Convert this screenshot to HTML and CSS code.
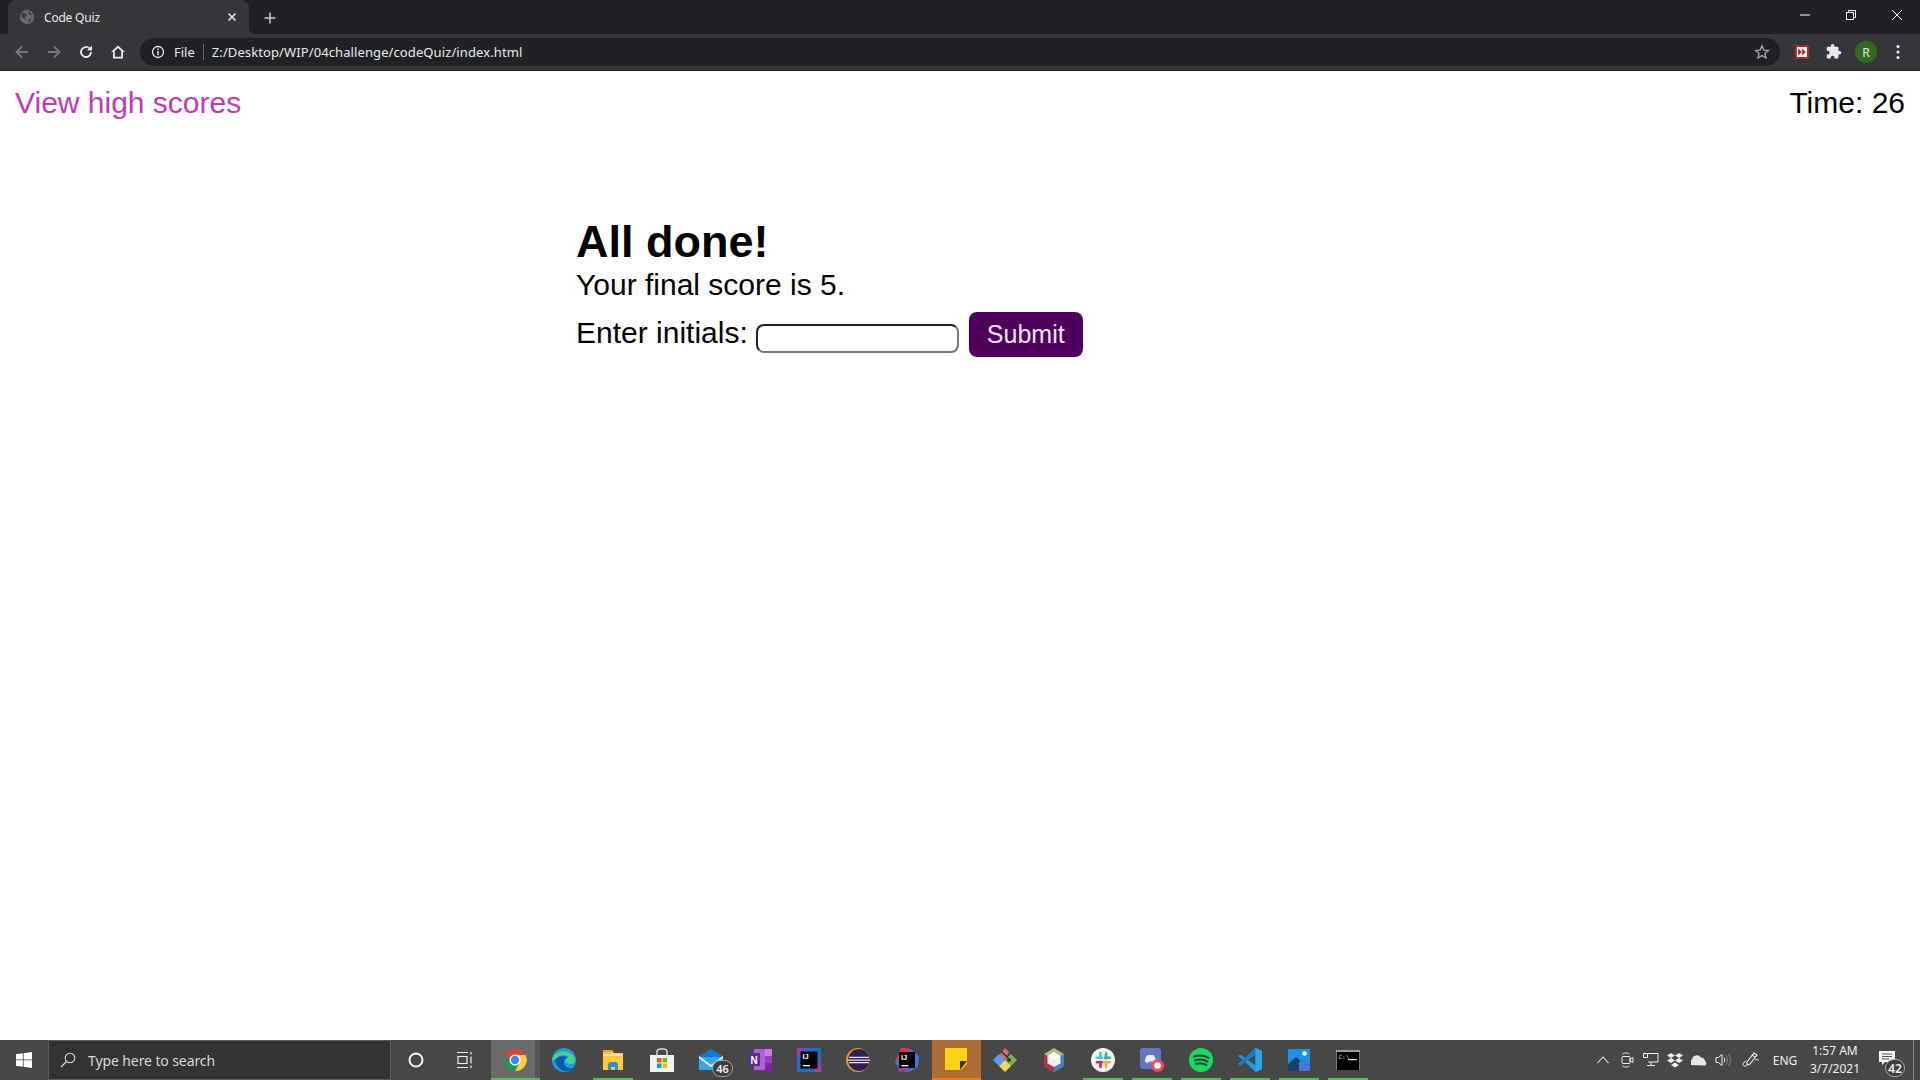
FILE: index.html
```html
<!DOCTYPE html>
<html lang="en">
<head>
<meta charset="utf-8">
<title>Code Quiz</title>
<link rel="stylesheet" href="styles.css">
</head>
<body>
<div class="screen">
  <div class="chrome">
    <div class="tabstrip">
      <div class="tab">
        <svg class="favicon" viewBox="0 0 16 16"><circle cx="8" cy="8" r="7" fill="#6a6b6f"/><path d="M3.500 3.500l4 1.500 1 2-3 1 1.500 3-2-1-3-3zM10 2.500l3 3-2 1-2-3zM10 10.500l2.500-1.500-1.500 4-2 0z" fill="#3c3d41"/></svg>
        <span class="tabtitle">Code Quiz</span>
        <svg class="tabclose" viewBox="0 0 10 10"><path d="M1.500 1.500l7 7M8.500 1.500l-7 7" stroke="#e8eaed" stroke-width="1.600"/></svg>
      </div>
      <svg class="newtab" viewBox="0 0 12 12"><path d="M6 .5v11M.5 6h11" stroke="#c8cacd" stroke-width="1.500"/></svg>
      <div class="winctrls">
        <svg class="winbtn" viewBox="0 0 46 14"><path d="M18 7h10" stroke="#fff" stroke-width="1"/></svg>
        <svg class="winbtn" viewBox="0 0 46 14"><path d="M18.500 4.500h7v7h-7zM20.500 4.500v-2h7v7h-2" fill="none" stroke="#fff" stroke-width="1"/></svg>
        <svg class="winbtn" viewBox="0 0 46 14"><path d="M18 2l10 10M28 2l-10 10" stroke="#fff" stroke-width="1"/></svg>
      </div>
    </div>
    <div class="toolbar">
      <svg class="navicon" viewBox="0 0 16 16"><path d="M14 8H3M8 2.500L2.500 8 8 13.500" fill="none" stroke="#77787b" stroke-width="1.800"/></svg>
      <svg class="navicon" viewBox="0 0 16 16"><path d="M2 8h11M8 2.500L13.500 8 8 13.500" fill="none" stroke="#77787b" stroke-width="1.800"/></svg>
      <svg class="navicon" viewBox="0 0 16 16"><path d="M13 8a5 5 0 1 1-1.500-3.600" fill="none" stroke="#e8eaed" stroke-width="1.800"/><path d="M14 1.500v5h-5z" fill="#e8eaed"/></svg>
      <svg class="navicon" viewBox="0 0 16 16"><path d="M8 1.500L1 8h2v6.500h10V8h2zM4.800 12.800V7L8 4l3.200 3v5.800z" fill="#e8eaed"/></svg>
      <div class="omnibox">
        <svg class="info" viewBox="0 0 14 14"><circle cx="7" cy="7" r="5.500" fill="none" stroke="#e8eaed" stroke-width="1.300"/><path d="M7 6v4.200M7 3.600v1.300" stroke="#e8eaed" stroke-width="1.400"/></svg>
        <span class="scheme">File</span>
        <span class="omnidiv"></span>
        <span class="url">Z:/Desktop/WIP/04challenge/codeQuiz/index.html</span>
        <svg class="star" viewBox="0 0 16 16"><path d="M8 1.800l1.800 4.300 4.600.4-3.500 3 1.100 4.500L8 11.600 4 14l1.100-4.500-3.500-3 4.600-.4z" fill="none" stroke="#a5a6a8" stroke-width="1.300"/></svg>
      </div>
      <div class="extensions">
        <svg class="ext" viewBox="0 0 16 16"><rect x="1" y="1" width="14" height="14" rx="2" fill="#b02a2e"/><rect x="3" y="3" width="10" height="10" fill="#fff"/><path d="M4 4.500L8 8l-4 3.500zM8 4.500L12 8l-4 3.500z" fill="#b02a2e"/></svg>
        <svg class="ext" viewBox="1 1 23 23"><path d="M20.500 11H19V7c0-1.100-.9-2-2-2h-4V3.500C13 2.120 11.880 1 10.500 1S8 2.120 8 3.500V5H4c-1.100 0-1.990.9-1.990 2v3.800H3.500c1.490 0 2.700 1.210 2.700 2.700s-1.210 2.700-2.700 2.700H2V20c0 1.100.9 2 2 2h3.800v-1.500c0-1.490 1.210-2.700 2.700-2.700 1.490 0 2.700 1.210 2.700 2.700V22H17c1.100 0 2-.9 2-2v-4h1.500c1.380 0 2.500-1.120 2.500-2.500S21.880 11 20.500 11z" fill="#e8eaed"/></svg>
        <span class="avatar">R</span>
        <svg class="ext" viewBox="0 0 16 16"><circle cx="8" cy="2.500" r="1.600" fill="#e8eaed"/><circle cx="8" cy="8" r="1.600" fill="#e8eaed"/><circle cx="8" cy="13.500" r="1.600" fill="#e8eaed"/></svg>
      </div>
    </div>
  </div>

  <div class="page">
    <header class="pagehead">
      <a class="scores" href="#">View high scores</a>
      <span class="timer">Time: 26</span>
    </header>
    <main class="done">
      <h1 class="title">All done!</h1>
      <p class="score">Your final score is 5.</p>
      <form class="entry">
        <label class="entrylabel" for="initials">Enter initials:</label>
        <input class="entryinput" id="initials" type="text">
        <button class="submit" type="button">Submit</button>
      </form>
    </main>
  </div>

  <footer class="taskbar">
    <div class="startbtn">
      <svg class="icon16" viewBox="0 0 16 16"><path d="M0 2.300l6.800-1v6.200H0zM7.600 1.200L16 0v7.500H7.600zM0 8.300h6.800v6.400l-6.800-1zM7.600 8.300H16V16l-8.400-1.200z" fill="#fff"/></svg>
    </div>
    <div class="searchbox">
      <svg class="searchicon" viewBox="0 0 16 16"><circle cx="10" cy="6" r="4.800" fill="none" stroke="#ddd" stroke-width="1.100"/><path d="M6.500 9.500L1 15" stroke="#ddd" stroke-width="1.100"/></svg>
      <span class="searchtext">Type here to search</span>
    </div>
    <div class="sysbtn"><svg class="icon16" viewBox="0 0 16 16"><circle cx="8" cy="8" r="6.500" fill="none" stroke="#f3f3f3" stroke-width="2"/></svg></div>
    <div class="sysbtn"><svg class="icon16" viewBox="0 0 16 16"><path d="M0 .5h11M0 15.500h11M1 4.500h9v7H1zM14 0v2.500M14 4.500v7M14 13.500v2.500" fill="none" stroke="#f0f0f0" stroke-width="1.200"/></svg></div>

    <div class="app app-active">
      <svg class="appicon" viewBox="0 0 24 24"><circle cx="12" cy="12" r="11" fill="#db4437"/><path d="M12 12L2.500 17.500A11 11 0 0 0 12 23l5-9z" fill="#0f9d58"/><path d="M2.500 17.500A11 11 0 0 1 2.500 6.500L7 14z" fill="#0f9d58"/><path d="M12 7h10.500A11 11 0 0 1 12 23l5-9z" fill="#ffcd40"/><circle cx="12" cy="12" r="5.500" fill="#fff"/><circle cx="12" cy="12" r="4.200" fill="#4285f4"/></svg>
    </div>
    <div class="app">
      <svg class="appicon" viewBox="0 0 24 24"><circle cx="12" cy="12" r="12" fill="#1b9de2"/><path d="M0 12C2 4 11 1 18 5c5 3 6 8 4 10-3 2-9 1-9-2 0-2 3-2 3-4-2-3-10-3-13 3z" fill="#4ed08a"/><path d="M3 12c1 6 5 11 11 11 3 0 6-1 8-3-4 1-10 0-10-6 0-3 2-4 4-5-5-2-12 0-13 3z" fill="#0c5ba8"/></svg>
    </div>
    <div class="app app-open">
      <svg class="appicon" viewBox="0 0 24 24"><path d="M2 2h9l2 3h9v17H2z" fill="#ffc83d"/><path d="M2 2h9l1 2H2z" fill="#e9a825"/><path d="M2 6h20v2H2z" fill="#ffe08a"/><path d="M7 22v-5a3 3 0 0 1 3-3h4a3 3 0 0 1 3 3v5h-3v-3h-4v3z" fill="#2d8fd8"/></svg>
    </div>
    <div class="app">
      <svg class="appicon" viewBox="0 0 24 24"><path d="M7 7V3a3 3 0 0 1 3-2h4a3 3 0 0 1 3 2v4" fill="none" stroke="#d8d8d8" stroke-width="1.500"/><path d="M0 7h24v17H0z" fill="#f3f3f3"/><path d="M7 10h4.500v4.500H7z" fill="#f25022"/><path d="M12.500 10H17v4.500h-4.500z" fill="#7fba00"/><path d="M7 15.500h4.500V20H7z" fill="#00a4ef"/><path d="M12.500 15.500H17V20h-4.500z" fill="#ffb900"/></svg>
    </div>
    <div class="app">
      <svg class="appicon" viewBox="0 0 24 24"><path d="M0 8L12 1l12 7v14H0z" fill="#0f78d4"/><path d="M0 9h24v13H0z" fill="#3ca4eb"/><path d="M0 8l12 9 12-9v2L12 19 0 10z" fill="#f2f6fa"/></svg>
      <span class="badge badge-mail">46</span>
    </div>
    <div class="app">
      <svg class="appicon" viewBox="0 0 24 24"><path d="M6 1h18v22H6z" fill="#b260d8"/><path d="M17 1h7v7h-7z" fill="#c77fe6"/><path d="M17 8h7v7h-7z" fill="#9a3fc4"/><path d="M17 15h7v8H6v-1h11z" fill="#7a2aa0"/><path d="M0 5h12v13H0z" fill="#5b2b9c"/><text class="appglyph" x="6" y="15.500">N</text></svg>
    </div>
    <div class="app">
      <svg class="appicon" viewBox="0 0 24 24"><path d="M0 0h24v24H0z" fill="#1f6fc4"/><path d="M0 0h8L0 8zM24 24V12l-8 12z" fill="#a83a9a"/><path d="M3.500 3.500h17v17h-17z" fill="#000"/><text class="ijtext" x="5.500" y="11">IJ</text><path d="M6 17h7v1.300H6z" fill="#fff"/></svg>
    </div>
    <div class="app">
      <svg class="appicon" viewBox="0 0 24 24"><circle cx="12" cy="12" r="12" fill="#f7941e"/><circle cx="13" cy="12" r="11" fill="#2c2255"/><path d="M3 8.800h20v1.300H3zM2 11.400h22v1.300H2zM3 14h20v1.300H3z" fill="#e8e4f4"/></svg>
    </div>
    <div class="app">
      <svg class="appicon" viewBox="0 0 24 24"><path d="M6 0l10 1 8 7-1 11-9 5-9-1-5-9z" fill="#2f7de0"/><path d="M0 14L6 0l10 1-5 8z" fill="#e8334c"/><path d="M3 23l2-10 9 11z" fill="#a83a9a"/><path d="M4 4h16v16H4z" fill="#000"/><text class="ijtext" x="6" y="11.500">IJ</text><path d="M6.500 17h7v1.300h-7z" fill="#fff"/></svg>
    </div>
    <div class="app app-sticky">
      <svg class="appicon" viewBox="0 0 24 24"><path d="M1 1h22v16l-6 6H1z" fill="#fcd116"/><path d="M16 14h7l-7 9z" fill="#3a3226"/></svg>
    </div>
    <div class="app">
      <svg class="appicon" viewBox="0 0 24 24"><path d="M12 0l4 4-4 8-8-2z" fill="#e06a6a"/><path d="M0 12l6-6 6 6-6 6z" fill="#5b9cf0"/><path d="M12 12l6-6 6 6-6 6z" fill="#76b84e"/><path d="M6 18l6-6 6 6-6 6z" fill="#f0d860"/><path d="M8 3l7 7" stroke="#333" stroke-width="1.600"/><circle cx="16" cy="12" r="2" fill="#333"/></svg>
    </div>
    <div class="app">
      <svg class="appicon" viewBox="0 0 24 24"><path d="M12 0l10 6v12l-10 6-10-6V6z" fill="#a8c070"/><path d="M2 6l10 6v12L2 18z" fill="#b03050"/><path d="M22 6l-10 6v12l10-6z" fill="#3f7fc8"/><path d="M12 4l6.500 4v7.500L12 19l-6.500-3.500V8z" fill="#f3efe2"/><path d="M12 11.500l6.500-3.500-6.500-4-6.500 4z" fill="#fff"/></svg>
    </div>
    <div class="app app-open">
      <svg class="appicon" viewBox="0 0 24 24"><circle cx="12" cy="12" r="12" fill="#f4f4f4"/><path d="M9.500 5v5M6 9.800h5" stroke="#36c5f0" stroke-width="2.600" stroke-linecap="round"/><path d="M15 5.500v5M14 9.800h5" stroke="#2eb67d" stroke-width="2.600" stroke-linecap="round"/><path d="M15 14v5M14 14.300h5" stroke="#ecb22e" stroke-width="2.600" stroke-linecap="round"/><path d="M9.500 14v5M6 14.300h5" stroke="#e01e5a" stroke-width="2.600" stroke-linecap="round"/></svg>
    </div>
    <div class="app app-open">
      <svg class="appicon" viewBox="0 0 24 24"><rect x="0" y="0" width="21" height="21" rx="3" fill="#6276c4"/><path d="M5 14c0-3 1-6 3-7h5c2 1 3 4 3 7l-3 1-1-1.500H9L8 15z" fill="#eef"/><circle cx="17.500" cy="17.500" r="6.500" fill="#e8515b"/><circle cx="17.500" cy="17.500" r="3.200" fill="#fff"/></svg>
    </div>
    <div class="app app-open">
      <svg class="appicon" viewBox="0 0 24 24"><circle cx="12" cy="12" r="12" fill="#1ed760"/><path d="M5 8.500c5-1.500 10-1 14.500 1.300M6 12.300c4.500-1.200 9-.7 12.500 1.300M6.800 15.800c3.700-1 7.500-.6 10.500 1.100" fill="none" stroke="#143" stroke-width="2" stroke-linecap="round"/></svg>
    </div>
    <div class="app app-open">
      <svg class="appicon" viewBox="0 0 24 24"><path d="M17.500 0L24 3v18l-6.500 3L7 14l-4.500 3.500L0 16l5-4-5-4 2.500-1.500L7 10z" fill="#1c9ce8"/><path d="M17.500 6.500v11L10 12z" fill="#474747"/><path d="M17.500 0L24 3v18l-6.500 3z" fill="#28a8f0"/><path d="M0 16l2.500 1.500L17.500 6V0z" fill="#0a6cb4" opacity=".6"/></svg>
    </div>
    <div class="app app-open">
      <svg class="appicon" viewBox="0 0 24 24"><path d="M1 1h22v22H1z" fill="#1e90e8"/><path d="M1 23v-7l8-7 14 12v2z" fill="#18406f"/><path d="M12 14l5-3 6 5v7H12z" fill="#4a78d0"/><circle cx="17.500" cy="5.500" r="2.300" fill="#fff"/></svg>
    </div>
    <div class="app app-open">
      <svg class="appicon" viewBox="0 0 24 24"><path d="M0 2h24v20H0z" fill="#000"/><path d="M0 2h24v2H0z" fill="#9a9a9a"/><path d="M0 4h1v18H0zM23 4h1v18h-1z" fill="#777"/><text class="termtext" x="2.500" y="11">C:\</text><path d="M12 11h9v1.200h-9z" fill="#ddd"/></svg>
    </div>

    <div class="tray">
      <div class="trayitem"><svg class="icon14" viewBox="0 0 14 14"><path d="M1.500 10L7 4l5.500 6" fill="none" stroke="#eee" stroke-width="1.100"/></svg></div>
      <div class="trayitem"><svg class="icon16" viewBox="0 0 16 16"><path d="M3.500 2c2-1.500 5-1.500 7 0M3.500 14c2 1.500 5 1.500 7 0" fill="none" stroke="#ddd"/><rect x="3" y="4.500" width="8" height="7" rx="1" fill="none" stroke="#eee"/><path d="M11 7l3-1.500v5L11 9z" fill="none" stroke="#eee"/></svg></div>
      <div class="trayitem"><svg class="icon16" viewBox="0 0 16 16"><path d="M3 1.500h12v8.500H5M8 10v3M4 13.500h8M.5 1.500h4v4h-4z" fill="none" stroke="#eee"/></svg></div>
      <div class="trayitem"><svg class="icon16" viewBox="0 0 16 16"><path d="M4 1l4 2.500L4 6 0 3.500zM12 1l4 2.500L12 6 8 3.500zM4 6l4 2.500L4 11 0 8.500zM12 6l4 2.500-4 2.500-4-2.500zM8 10.500l4 2.500-4 2.500L4 13z" fill="#f2f2f2"/></svg></div>
      <div class="trayitem"><svg class="icon16" viewBox="0 0 16 16"><path d="M0 13a3 3 0 0 1 1-5.500 5 5 0 0 1 9-2A4 4 0 0 1 14 9a2.500 2.500 0 0 1 0 4.500z" fill="#e6e6e6"/></svg></div>
      <div class="trayitem"><svg class="icon16" viewBox="0 0 16 16"><path d="M1 5.500h2.500L7 2.500v11l-3.500-3H1z" fill="none" stroke="#eee"/><path d="M9 5.500c1 1.500 1 3.500 0 5" fill="none" stroke="#eee"/><path d="M11 3.500c2 2.500 2 6.500 0 9M13.500 2c2.500 3.500 2.500 8.500 0 12" fill="none" stroke="#888"/></svg></div>
      <div class="trayitem trayitem-pen"><svg class="icon16 pen" viewBox="0 0 18 16"><path d="M12 1l3 2-7 9-3 1 0-3zM10 3l3 2" fill="none" stroke="#eee" stroke-width="1.100"/><path d="M4 9c-3 1-4 4-2 5s3-1 3-1M13 8c2-1 3 0 4 0" fill="none" stroke="#eee"/></svg></div>
      <div class="traylang">ENG</div>
      <div class="clock"><span>1:57 AM</span><span>3/7/2021</span></div>
      <div class="notif">
        <svg class="notificon" viewBox="0 0 16 16"><path d="M0 1h16v11H6l-3 3v-3H0z" fill="#f4f4f4"/><path d="M3 4h10M3 6.500h10M3 9h7" stroke="#555" stroke-width="1"/></svg>
        <span class="badge badge-notif">42</span>
      </div>
      <div class="showdesk"></div>
    </div>
  </footer>
</div>
</body>
</html>
```
FILE: styles.css
```css
* { box-sizing: border-box; }
html, body { margin: 0; height: 100%; }
body { font-family: "Liberation Sans", Arial, sans-serif; background: #fff; overflow: hidden; }
.screen { display: flex; flex-direction: column; height: 1080px; width: 1920px; }

/* browser chrome */
.chrome { flex: 0 0 71px; background: #35363a; font-family: "Noto Sans", sans-serif; color: #e8eaed; }
.tabstrip { height: 34px; background: #202124; display: flex; align-items: center; padding-left: 8px; }
.tab { width: 241px; height: 34px; flex: none; background: #35363a; border-radius: 8px 8px 0 0; display: flex; align-items: center; padding: 0 12px 0 11px; margin-right: 15px; position: relative; }
.tab::after { content: ""; position: absolute; right: -7px; bottom: 0; width: 7px; height: 7px; background: radial-gradient(circle at 100% 0, #202124 7px, #35363a 7.500px); }
.favicon { width: 16px; height: 16px; flex: none; margin-right: 9px; }
.tabtitle { font-size: 12px; color: #e8eaed; flex: 1; letter-spacing: -.2px; }
.tabclose { width: 10px; height: 10px; flex: none; }
.newtab { width: 12px; height: 12px; flex: none; margin-top: 1px; }
.winctrls { margin-left: auto; display: flex; margin-top: -4px; }
.winbtn { width: 46px; height: 14px; display: block; flex: none; }
.toolbar { height: 37px; display: flex; align-items: center; padding-left: 14px; border-bottom: 1px solid #1f2023; }
.navicon { width: 16px; height: 16px; flex: none; margin-right: 16px; }
.omnibox { width: 1640px; height: 28px; flex: none; margin-left: -2px; background: #202124; border-radius: 14px; display: flex; align-items: center; padding: 0 10px 0 11px; }
.info { width: 14px; height: 14px; flex: none; margin-right: 9px; }
.scheme { font-size: 13px; }
.omnidiv { width: 1px; height: 16px; background: #5f6368; margin: 0 8px; flex: none; }
.url { font-size: 13px; flex: 1; letter-spacing: .1px; }
.star { width: 16px; height: 16px; flex: none; }
.extensions { display: flex; align-items: center; margin-left: 14px; flex: none; }
.ext { width: 16px; height: 16px; margin-right: 16px; flex: none; }
.avatar { width: 22px; height: 22px; flex: none; border-radius: 50%; background: #2f6a1d; color: #e8eaed; font-size: 12px; display: flex; align-items: center; justify-content: center; margin: 0 13px 0 -3px; }

/* page */
.page { flex: 1; background: #fff; }
.pagehead { display: flex; justify-content: space-between; padding: 12px 15px 0; font-size: 30px; line-height: 39px; }
.scores { color: #c13ab3; text-decoration: none; }
.timer { color: #000; }
.done { margin: 94px 0 0 576px; color: #000; }
.title { margin: 0; font-size: 45px; line-height: 52px; font-weight: bold; }
.score { margin: 0; font-size: 30px; line-height: 34px; }
.entry { display: flex; align-items: flex-start; margin-top: 10px; }
.entrylabel { font-size: 30px; line-height: 34px; margin-top: 4px; }
.entryinput { width: 203px; height: 29px; margin: 12px 0 0 8px; border: 2px inset #767676; border-radius: 8px; background: #fff; padding: 0; }
.submit { width: 114px; height: 45px; margin-left: 10px; background: #4f005f; color: #f0e6f0; font: 25px "Liberation Sans", Arial, sans-serif; border: 0; border-radius: 8px; padding: 0; }

/* taskbar */
.taskbar { flex: 0 0 40px; background: #474747; display: flex; align-items: stretch; font-family: "Noto Sans", sans-serif; color: #f0f0f0; }
.startbtn { width: 48px; flex: none; display: flex; align-items: center; justify-content: center; }
.icon16 { width: 16px; height: 16px; display: block; }
.icon14 { width: 14px; height: 14px; display: block; }
.searchbox { width: 343px; flex: none; background: #333; border: 1px solid #5a5a5a; display: flex; align-items: center; padding-left: 11px; }
.searchicon { width: 16px; height: 16px; margin-right: 12px; }
.searchtext { font-size: 14px; color: #d8d8d8; letter-spacing: -.1px; }
.sysbtn { width: 49px; flex: none; display: flex; align-items: center; justify-content: center; }
.app { width: 49px; flex: none; display: flex; align-items: center; justify-content: center; position: relative; padding-right: 1px; }
.app-open::after, .app-active::after { content: ""; position: absolute; left: 4px; right: 5px; bottom: 0; height: 2px; background: #5cb85c; }
.app-active { margin-left: 2px; background: linear-gradient(to right, #6a6a6a 44px, #555 44px); }
.app-active::after { left: 0; right: 0; }
.app-sticky { background: #b06c35; border-bottom: 2px solid #f47a20; }
.appicon { width: 24px; height: 24px; display: block; }
.appglyph { font: bold 10px "Liberation Sans", sans-serif; fill: #fff; text-anchor: middle; }
.ijtext { font: bold 7.500px "Liberation Sans", sans-serif; fill: #fff; }
.termtext { font: 6px "Liberation Mono", monospace; fill: #ddd; }
.badge { position: absolute; background: #3c3c3c; border: 1px solid #aaa; color: #f4f4f4; font-weight: 600; display: flex; align-items: center; justify-content: center; }
.badge-mail { width: 21px; height: 17px; left: 25px; bottom: 3px; font-size: 11px; border-radius: 9px; }
.tray { margin-left: auto; display: flex; align-items: stretch; }
.trayitem { width: 24px; flex: none; display: flex; align-items: center; justify-content: center; }
.trayitem-pen { width: 32px; }
.pen { width: 18px; }
.traylang { width: 36px; font-size: 12px; display: flex; align-items: center; justify-content: center; }
.clock { width: 64px; font-size: 12px; line-height: 18px; display: flex; flex-direction: column; align-items: center; justify-content: center; }
.notif { width: 46px; position: relative; display: flex; align-items: center; justify-content: center; }
.notificon { width: 16px; height: 16px; margin-right: 6px; margin-top: -4px; }
.badge-notif { width: 20px; height: 18px; left: 18px; bottom: 3px; font-size: 12px; border-radius: 9px; }
.showdesk { width: 7px; border-left: 1px solid #8a8a8a; }
```
